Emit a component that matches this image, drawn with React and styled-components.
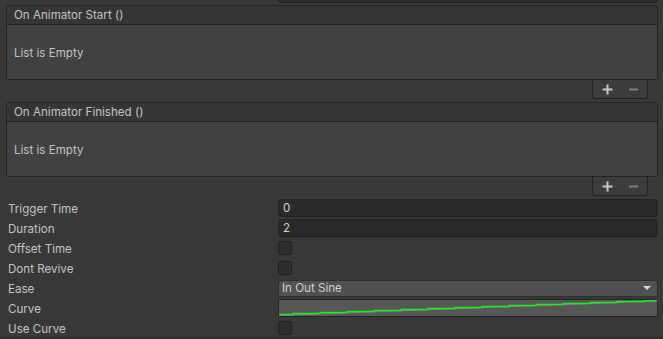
import React from "react";
import styled, { createGlobalStyle } from "styled-components";

const Global = createGlobalStyle`
  html, body { margin: 0; padding: 0; background: #383838; }
  body { font-family: Inter, "Noto Sans", "Liberation Sans", sans-serif; font-size: 11.6px; color: #c4c4c4; overflow: hidden; }
`;

const Page = styled.div`
  width: 663px;
  height: 339px;
  background: #383838;
  display: flex;
  flex-direction: column;
  overflow: hidden;
`;

const TopStub = styled.div`
  height: 3px;
  padding: 0 5px 0 278px;
  display: flex;
  align-items: flex-end;
  overflow: hidden;
`;

const StubField = styled.div`
  flex: 1;
  height: 18px;
  flex-shrink: 0;
  background: #2a2a2a;
  border: 1px solid #212121;
  border-radius: 3px;
  box-sizing: border-box;
`;

const EventBlock = styled.div`
  margin: ${(p) => p.$top}px 5px 0 6px;
  display: flex;
  flex-direction: column;
`;

const EventBox = styled.div`
  border: 1px solid #232323;
  border-radius: 3px;
  overflow: hidden;
`;

const EventHeader = styled.div`
  height: 18px;
  line-height: 19px;
  padding-left: 7px;
  background: #353535;
  border-bottom: 1px solid #232323;
  color: #c4c4c4;
`;

const EventBody = styled.div`
  height: 54px;
  background: #414141;
  display: flex;
  align-items: center;
  padding-left: 7px;
  padding-top: 1px;
  box-sizing: border-box;
  color: #c4c4c4;
`;

const Footer = styled.div`
  align-self: flex-end;
  margin-right: 10px;
  width: 56px;
  height: 19px;
  box-sizing: border-box;
  background: #3c3c3c;
  border: 1px solid #232323;
  border-top: none;
  border-radius: 0 0 3px 3px;
  display: flex;
  align-items: center;
  padding: 0 0 0 9px;
  gap: 15px;
`;

const IconBtn = styled.span`
  display: flex;
  width: 11px;
  height: 12px;
  align-items: center;
  justify-content: center;
`;

const Props = styled.div`
  margin-top: 3px;
  display: flex;
  flex-direction: column;
  gap: 2px;
  padding: 0 5px 0 8px;
`;

const Row = styled.div`
  height: 18px;
  display: grid;
  grid-template-columns: 270px 1fr;
  align-items: center;
`;

const Label = styled.div`
  color: #c4c4c4;
  white-space: nowrap;
  padding-top: 1px;
`;

const TextField = styled.div`
  height: 18px;
  box-sizing: border-box;
  background: #2a2a2a;
  border: 1px solid #212121;
  border-radius: 3px;
  padding-left: 4px;
  line-height: 17px;
  color: #d2d2d2;
`;

const Check = styled.div`
  width: 14px;
  height: 14px;
  box-sizing: border-box;
  background: #2d2d2d;
  border: 1px solid #202020;
  border-radius: 2px;
`;

const Dropdown = styled.div`
  height: 17px;
  box-sizing: border-box;
  background: #515151;
  border: 1px solid #2f2f2f;
  border-radius: 3px;
  padding: 0 6px 0 3px;
  display: flex;
  align-items: center;
  justify-content: space-between;
  color: #d2d2d2;
`;

const CurveBox = styled.div`
  height: 18px;
  box-sizing: border-box;
  background: #575757;
  border: 1px solid #242424;
  border-radius: 2px;
  overflow: hidden;
  display: flex;
`;

const Separator = styled.div`
  height: 1px;
  background: #2a2a2a;
`;

const Plus = () => (
  <svg width="11" height="11" viewBox="0 0 11 11">
    <rect x="4.5" y="0.5" width="2" height="10" fill="#c8c8c8" />
    <rect x="0.5" y="4.5" width="10" height="2" fill="#c8c8c8" />
  </svg>
);
const Minus = () => (
  <svg width="9" height="11" viewBox="0 0 9 11">
    <rect x="0" y="4.5" width="9" height="2" fill="#7e7e7e" />
  </svg>
);

const Curve = () => {
  const w = 378;
  const steps = 15;
  const stepW = 27;
  let d = "";
  for (let i = 0; i <= steps; i++) {
    const y = 14.5 - i * 1;
    const x0 = i === 0 ? 0 : 14 + (i - 1) * stepW;
    const x1 = i === 0 ? 14 : Math.min(w, 14 + i * stepW);
    d += `${i === 0 ? "M" : "L"}${x0},${y} L${x1},${y} `;
  }
  return (
    <svg width="100%" height="16" viewBox={`0 0 ${w} 16`} preserveAspectRatio="none">
      <line x1="0" y1="15.5" x2={w} y2="1" stroke="#8a8a8a" strokeWidth="0.8" />
      <path d={d} fill="none" stroke="#19f019" strokeWidth="1.3" />
    </svg>
  );
};

const Arrow = () => (
  <svg width="8" height="4" viewBox="0 0 8 4">
    <polygon points="0,0 8,0 4,4" fill="#d8d8d8" />
  </svg>
);

function Event({ title, top }) {
  return (
    <EventBlock $top={top}>
      <EventBox>
        <EventHeader>{title}</EventHeader>
        <EventBody>List is Empty</EventBody>
      </EventBox>
      <Footer>
        <IconBtn><Plus /></IconBtn>
        <IconBtn><Minus /></IconBtn>
      </Footer>
    </EventBlock>
  );
}

export default function App() {
  return (
    <>
      <Global />
      <Page>
        <TopStub><StubField /></TopStub>
        <Event title="On Animator Start ()" top={2} />
        <Event title="On Animator Finished ()" top={3} />
        <Props>
          <Row><Label>Trigger Time</Label><TextField>0</TextField></Row>
          <Row><Label>Duration</Label><TextField>2</TextField></Row>
          <Row><Label>Offset Time</Label><Check /></Row>
          <Row><Label>Dont Revive</Label><Check /></Row>
          <Row><Label>Ease</Label><Dropdown><span>In Out Sine</span><Arrow /></Dropdown></Row>
          <Row><Label>Curve</Label><CurveBox><Curve /></CurveBox></Row>
          <Row><Label>Use Curve</Label><Check /></Row>
        </Props>
        <Separator />
      </Page>
    </>
  );
}
